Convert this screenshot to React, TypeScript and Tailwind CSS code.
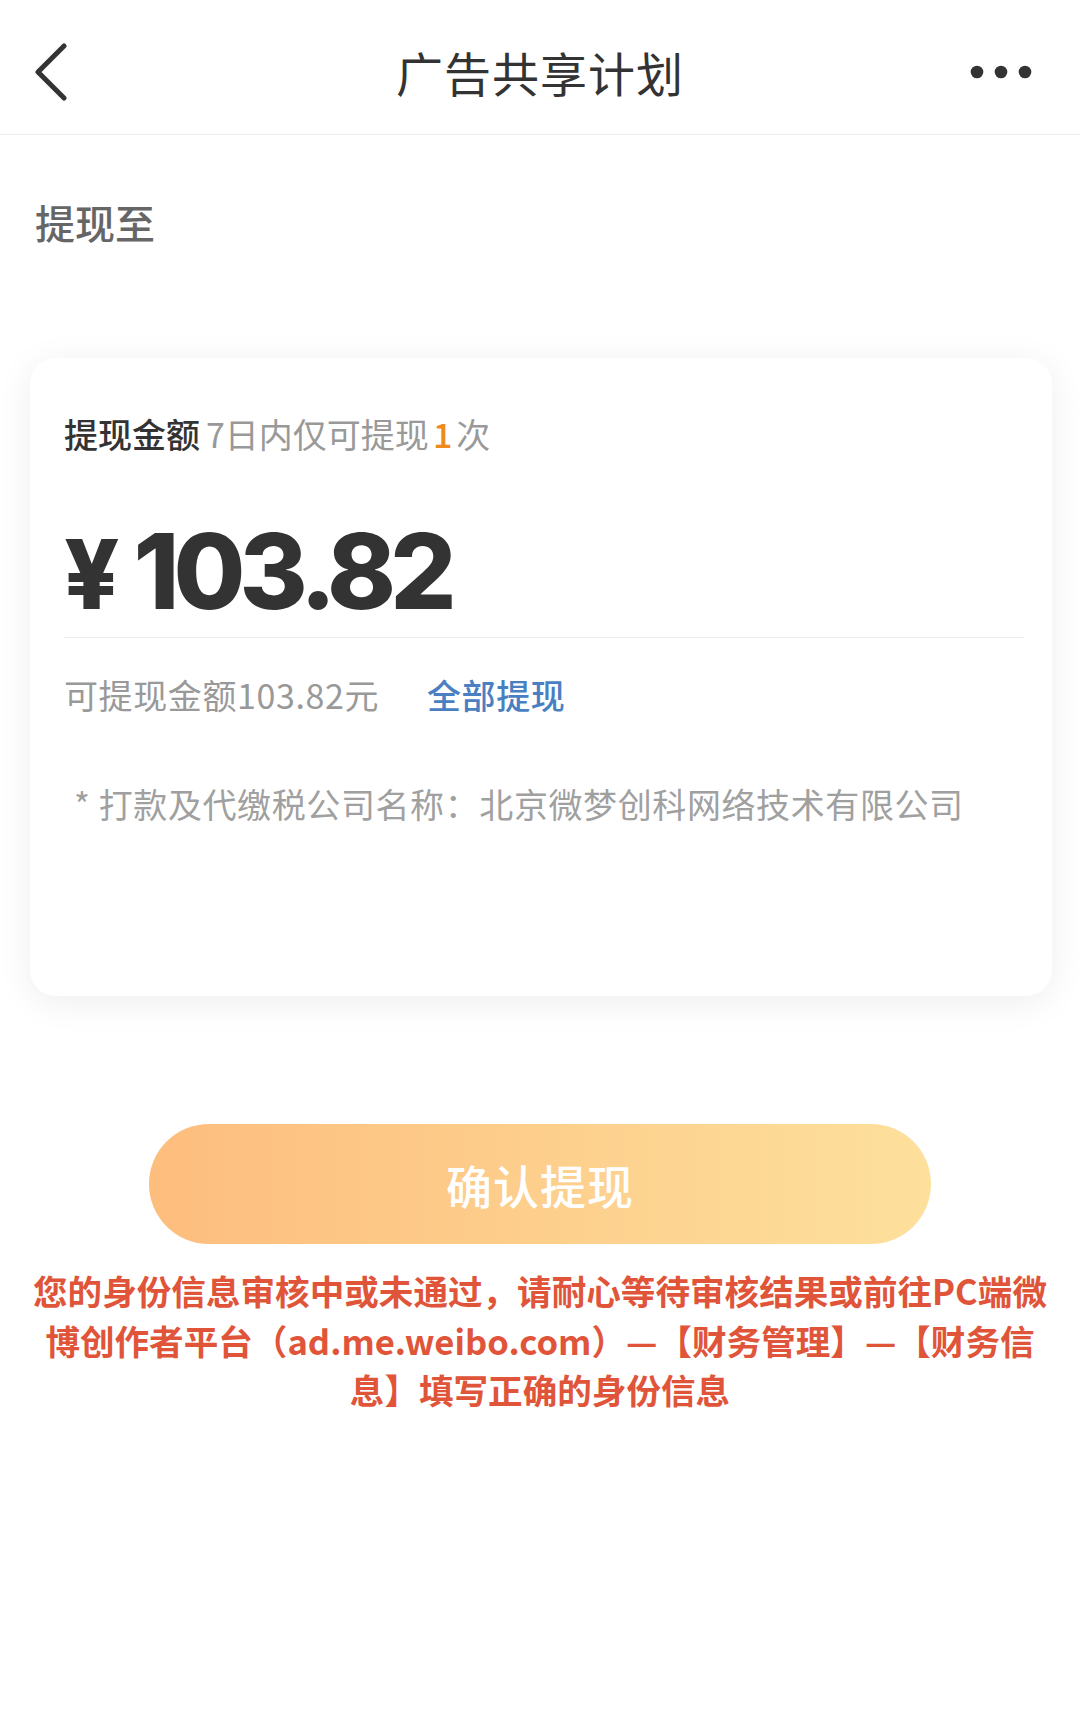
import React from "react";

const cjk = "font-['Noto_Sans_CJK_SC','Noto_Sans',sans-serif]";

export default function App() {
  return (
    <div className={`min-h-[1735px] w-[1080px] bg-white ${cjk}`}>
      <header className="grid h-[135px] grid-cols-[1fr_auto_1fr] items-center border-b border-[#ececec] pt-[9px]">
        <div className="flex items-center pl-[33px]">
          <svg width="36" height="58" viewBox="0 0 36 58" fill="none">
            <path d="M31 3 L5 29 L31 55" stroke="#333333" strokeWidth="5" strokeLinecap="round" strokeLinejoin="round" />
          </svg>
        </div>
        <h1 className="text-[47px] leading-none font-normal tracking-[1px] text-[#333333]">广告共享计划</h1>
        <div className="flex items-center justify-end pr-[48px]">
          <svg width="62" height="14" viewBox="0 0 62 14">
            <circle cx="7" cy="7" r="6.3" fill="#333333" />
            <circle cx="31" cy="7" r="6.3" fill="#333333" />
            <circle cx="55" cy="7" r="6.3" fill="#333333" />
          </svg>
        </div>
      </header>

      <div className="px-[35px] pt-[67px] text-[40px] leading-none font-medium text-[#666666]">提现至</div>

      <section className="ml-[30px] mr-[28px] mt-[116px] flex h-[638px] flex-col rounded-[26px] bg-white pl-[34px] pr-[28px] pt-[59px] shadow-[0_6px_36px_rgba(0,0,0,0.07)]">
        <div className="flex items-baseline text-[34px] leading-none">
          <span className="font-medium text-[#333333]">提现金额</span>
          <span className="ml-[6px] text-[#999999]">7日内仅可提现</span>
          <span className="mx-[4px] font-medium text-[#f08a1c]">1</span>
          <span className="text-[#999999]">次</span>
        </div>
        <div className="mt-[68px] flex items-baseline font-['Inter',sans-serif] text-[104px] leading-none font-extrabold text-[#333333]">
          <span className="mr-[14px] text-[96px]">¥</span>
          <span className="tracking-[-6px]">103.82</span>
        </div>
        <div className="mt-[14px] h-px bg-[#ececec]" />
        <div className="mt-[40px] flex items-baseline text-[34px] leading-none">
          <span className="tracking-[0.6px] text-[#999999]">可提现金额103.82元</span>
          <span className="ml-[48px] font-medium tracking-[0.6px] text-[#4a7fc1]">全部提现</span>
        </div>
        <div className="mt-[75px] pl-[10px] text-[34px] leading-none tracking-[0.6px] text-[#a0a0a0]">
          * 打款及代缴税公司名称：北京微梦创科网络技术有限公司
        </div>
      </section>

      <button className="mx-auto mt-[128px] flex h-[120px] w-[782px] items-center justify-center rounded-full bg-gradient-to-r from-[#fdbd7d] to-[#fde09c] text-[46px] leading-none font-medium tracking-[1px] text-white">
        确认提现
      </button>

      <p className="mt-[22px] px-[10px] text-center text-[34.6px] leading-[49.5px] font-semibold text-[#e0553a]">
        <span className="whitespace-nowrap">您的身份信息审核中或未通过，请耐心等待审核结果或前往PC端微</span>
        <br />
        <span className="whitespace-nowrap">博创作者平台（ad.me.weibo.com）—【财务管理】—【财务信</span>
        <br />
        <span className="whitespace-nowrap">息】填写正确的身份信息</span>
      </p>
    </div>
  );
}
